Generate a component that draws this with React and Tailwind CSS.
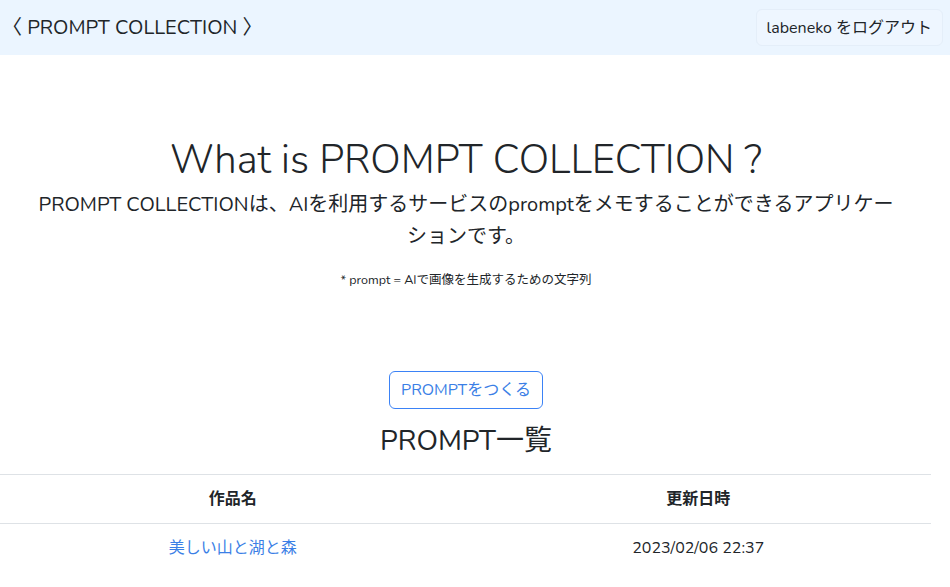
const font = { fontFamily: '"Nunito", Lato, "Noto Sans CJK JP", sans-serif' };

function Header() {
  return (
    <header className="flex h-[55px] items-center justify-between bg-[#ebf5ff] pl-[2px] pr-[7px]">
      <a href="#" className="text-[20px] text-[#212529]">
        〈 PROMPT COLLECTION 〉
      </a>
      <button
        type="button"
        className="h-[37px] rounded-md border border-[#e4eef9] bg-[#eef6ff] px-[10px] text-[16px] text-[#212529]"
      >
        labeneko をログアウト
      </button>
    </header>
  );
}

function App() {
  const rows = [{ id: 1, title: "美しい山と湖と森", updated: "2023/02/06 22:37" }];

  return (
    <div className="min-h-screen bg-white text-[#212529]" style={font}>
      <Header />

      <main className="w-[932px]">
        <section className="mx-auto flex max-w-[862px] flex-col items-center pt-[81px] text-center">
          <h1 className="text-[40px] font-light leading-[48px]">What is PROMPT COLLECTION ?</h1>
          <p className="mt-[5px] text-[20px] leading-[32px]">
            PROMPT COLLECTIONは、AIを利用するサービスのpromptをメモすることができるアプリケーションです。
          </p>
          <p className="mt-[18px] text-[12.5px] leading-[18px]">* prompt = AIで画像を生成するための文字列</p>
        </section>

        <div className="mt-[82px] flex flex-col items-center">
          <button
            type="button"
            className="h-[38px] w-[154px] rounded-md border border-[#3b82f6] text-[16px] text-[#3b7fe6]"
          >
            PROMPTをつくる
          </button>
          <h2 className="mt-[12px] text-[28px] leading-[40px]">PROMPT一覧</h2>
        </div>

        <table className="mt-[13px] w-[931px] border-collapse text-center text-[16px]">
          <thead>
            <tr className="border-y border-[#dee2e6]">
              <th className="h-[49px] w-1/2 font-bold">作品名</th>
              <th className="h-[49px] w-1/2 font-bold">更新日時</th>
            </tr>
          </thead>
          <tbody>
            {rows.map((row) => (
              <tr key={row.id}>
                <td className="h-[48px]">
                  <a href="#" className="text-[#3b7fe6]">
                    {row.title}
                  </a>
                </td>
                <td className="h-[48px]">{row.updated}</td>
              </tr>
            ))}
          </tbody>
        </table>
      </main>
    </div>
  );
}

export default App;
